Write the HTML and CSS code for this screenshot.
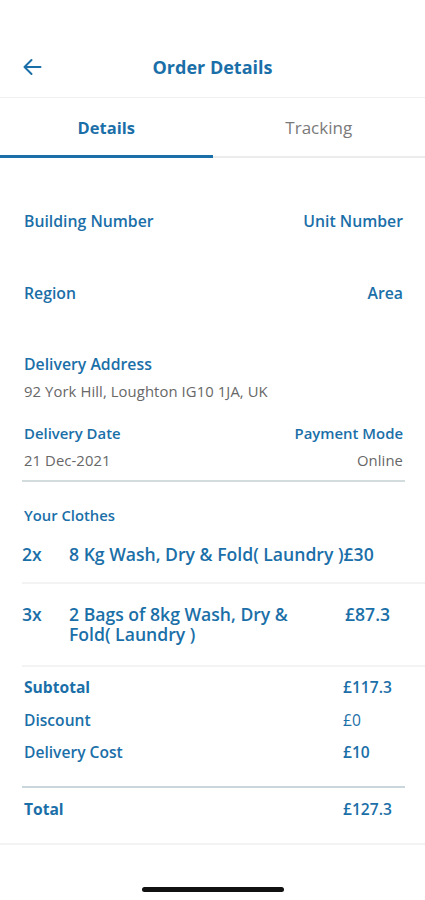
FILE: index.html
```html
<!DOCTYPE html>
<html>
<head>
<meta charset="utf-8">
<link rel="stylesheet" href="styles.css">
</head>
<body>
<div class="screen">
  <header class="appbar">
    <svg class="back" width="20" height="20" viewBox="0 0 20 20"><path d="M18.5 10H2.5M9.5 3l-7 7 7 7" fill="none" stroke="#1b6fa8" stroke-width="2" stroke-linecap="round" stroke-linejoin="round"/></svg>
    <h1 class="title">Order Details</h1>
    <span class="spacer"></span>
  </header>
  <nav class="tabs">
    <div class="tab active">Details</div>
    <div class="tab">Tracking</div>
  </nav>
  <main class="content">
    <div class="pair row-bn">
      <span class="label">Building Number</span>
      <span class="label">Unit Number</span>
    </div>
    <div class="pair row-region">
      <span class="label">Region</span>
      <span class="label">Area</span>
    </div>
    <div class="block addr">
      <div class="label">Delivery Address</div>
      <div class="value">92 York Hill, Loughton IG10 1JA, UK</div>
    </div>
    <div class="block dates">
      <div class="pair">
        <span class="label sm">Delivery Date</span>
        <span class="label sm">Payment Mode</span>
      </div>
      <div class="pair vals">
        <span class="value">21 Dec-2021</span>
        <span class="value">Online</span>
      </div>
    </div>
    <div class="clothes-title">Your Clothes</div>
    <div class="item first">
      <span class="qty">2x</span>
      <span class="name">8 Kg Wash, Dry &amp; Fold( Laundry )</span><span class="price">£30</span>
    </div>
    <div class="item second">
      <span class="qty">3x</span>
      <span class="name wrap">2 Bags of 8kg Wash, Dry &amp; Fold( Laundry )</span>
      <span class="price">£87.3</span>
    </div>
    <div class="totals">
      <div class="trow"><span class="strong">Subtotal</span><span class="amt">£117.3</span></div>
      <div class="trow"><span class="light">Discount</span><span class="amt light">£0</span></div>
      <div class="trow"><span class="light">Delivery Cost</span><span class="amt">£10</span></div>
    </div>
    <div class="grand">
      <div class="trow"><span class="strong">Total</span><span class="amt">£127.3</span></div>
    </div>
  </main>
  <div class="home-area"><div class="home-bar"></div></div>
</div>
</body>
</html>
```
FILE: styles.css
```css
* { box-sizing: border-box; margin: 0; padding: 0; }
html, body { background: #fff; }
body {
  font-family: "Open Sans", "Noto Sans", sans-serif;
  color: #1b6fa8;
  width: 425px;
  height: 900px;
  overflow: hidden;
}
.screen { display: flex; flex-direction: column; height: 900px; }
.screen > * { flex: none; }
.appbar {
  height: 98px;
  padding: 37px 22px 0 22px;
  display: flex;
  align-items: center;
  border-bottom: 1px solid #f0f0f0;
}
.back { flex: none; }
.spacer { width: 20px; flex: none; }
.title {
  flex: 1;
  text-align: center;
  font-size: 18px;
  font-weight: 700;
  color: #1b6fa8;
}
.tabs {
  display: flex;
  height: 60px;
  border-bottom: 2px solid #ececec;
}
.tab {
  flex: 1;
  text-align: center;
  font-size: 17px;
  padding-top: 18px;
  color: #7a7a7a;
}
.tab.active {
  color: #1b6fa8;
  font-weight: 700;
  font-size: 16.5px;
  border-bottom: 3px solid #1b6fa8;
  margin-bottom: -2px;
}
.content { padding: 0 22px 0 24px; display: flex; flex-direction: column; }
.content > * { flex: none; }
.pair { display: flex; justify-content: space-between; }
.label { font-size: 15.8px; font-weight: 600; color: #1b6fa8; }
.label.sm { font-size: 14.9px; }
.row-bn { margin-top: 52px; }
.row-region { margin-top: 50px; }
.addr { margin-top: 49px; }
.addr .value { margin-top: 6px; }
.value { font-size: 14.8px; color: #676767; letter-spacing: 0.1px; }
.dates { margin-top: 22px; }
.dates .vals { margin-top: 7px; }
.dates {
  border-bottom: 2px solid #d3dcdc;
  padding-bottom: 10px;
  margin-right: -2px;
  margin-left: -2px;
  padding-left: 2px;
  padding-right: 2px;
}
.clothes-title { font-size: 14.8px; font-weight: 600; margin-top: 23px; }
.item {
  display: flex;
  font-size: 17.6px;
  font-weight: 600;
  margin-left: -2px;
  margin-right: -22px;
  border-bottom: 2px solid #f3f3f3;
}
.item.first { margin-top: 17px; padding-bottom: 16px; }
.item.second { padding-top: 20px; padding-bottom: 21px; line-height: 20px; }
.qty { width: 47px; flex: none; }
.name { flex: none; }
.name.wrap { width: 276px; padding-right: 40px; }
.price { flex: none; }
.totals { padding-top: 4px; padding-bottom: 17px; border-bottom: 2px solid #c9d6dc; margin-left: -2px; margin-right: -2px; padding-left: 2px; padding-right: 2px; }
.trow { display: flex; font-size: 15.6px; font-weight: 600; height: 32.5px; align-items: center; }
.trow span:first-child { flex: 1; }
.trow .amt { width: 60px; }
.trow .strong { font-weight: 700; }
.trow .light { font-weight: 600; }
.trow .amt.light { font-weight: 500; }
.grand { padding: 5px 0 0; height: 53px; }
.home-area {
  margin-top: auto;
  height: 57px;
  border-top: 2px solid #f3f3f3;
  display: flex;
  justify-content: center;
  padding-top: 42px;
}
.home-bar { width: 142px; height: 5px; border-radius: 3px; background: #111; }
```
